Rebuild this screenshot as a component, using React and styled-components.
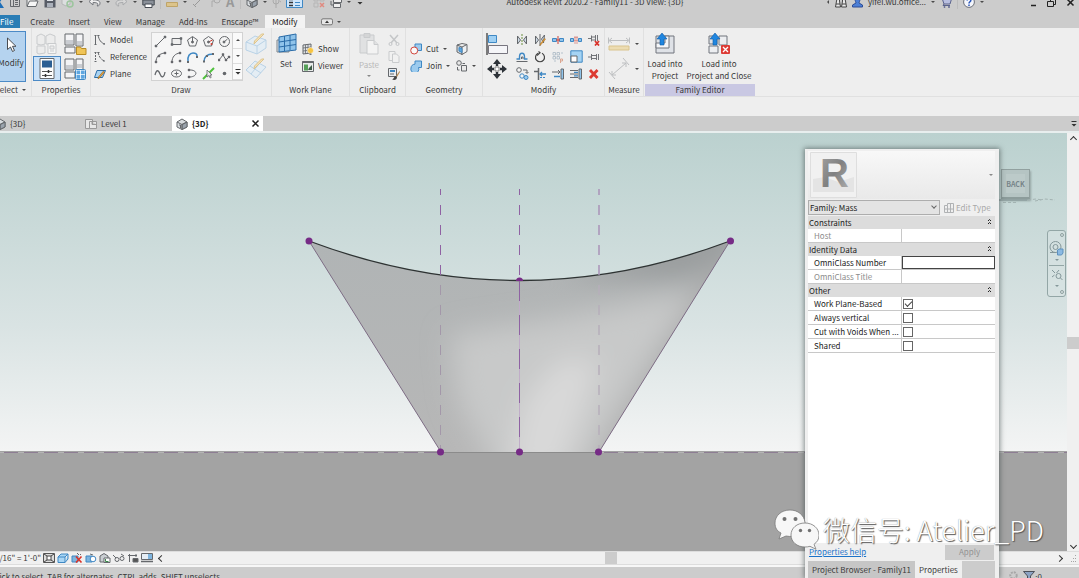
import React from 'react';
import styled, { createGlobalStyle, css } from 'styled-components';

const GlobalStyle = createGlobalStyle`
  * {
    box-sizing: border-box;
  }
  body {
    margin: 0;
    overflow: hidden;
    font-family: 'Noto Sans CJK SC', 'Open Sans', sans-serif;
    font-size: 8px;
    line-height: 12px;
    color: #383838;
    background: #cccccc;
  }
  button, input, select {
    margin: 0;
    padding: 0;
    border: 0;
    font: inherit;
    color: inherit;
    background: transparent;
  }
  svg {
    display: block;
    flex: none;
  }
`;

/* ---------- icons: [width, height, drawing] ---------- */

const sheet = '#fdfdfd';
const line = '#65686c';
const blue = '#3f88c4';
const sky = '#9ccbee';
const off = '#c9cbcd';

const icons = {
  revit: [9, 12, <path d="M4 0h5L5 6l4 6H5L1 7z" fill="#1f6fb8" />],
  recent: [12, 12, <g fill="none" stroke={line}><path d="M1.500 1v9.500h9V1" /><path d="M4.500 1v9M6 4.500h3M6 6.500h3M6 8.500h3" /></g>],
  open: [13, 12, <g stroke={line}><path d="M1 10V2h4l1 1h4v2" fill="#eee" /><path d="M1 10.500L3.500 5H12l-2 5.500z" fill="#f6f6f6" /></g>],
  save: [12, 12, <g><path d="M.5.5h11v11H.5z" fill="#575c66" /><path d="M3 1h6v4H3z" fill="#dfe3e8" /><path d="M3 7h6v4H3z" fill="#aab0ba" /></g>],
  sync: [13, 12, <g><path d="M1 2l4-1 4 1v6L5 10 1 8z" fill="#dcdedf" stroke="#b5b7b8" /><circle cx="9" cy="8" r="3" fill="none" stroke="#9cc59d" strokeWidth="1.500" /></g>],
  undo: [13, 12, <path d="M1 5.500L5 2v2c4-.5 7 1 7 3s-1 3-3 3c2-2 1-3.500-4-3.500V9z" fill="#eee" stroke="#74777d" />],
  redo: [13, 12, <path d="M12 5.500L8 2v2C4 3.500 1 5 1 7s1 3 3 3C2 8 3 6.500 8 6.500V9z" fill="#d6d6d6" stroke="#a9abad" />],
  print: [13, 12, <g stroke="#454a52"><path d="M3 4V1h7v3" fill="#fff" /><path d="M.8 4h11.400v5H.8z" fill="#8a9099" /><path d="M3 8h7v3.500H3z" fill="#fff" /></g>],
  ruler: [12, 12, <g><path d="M1 3.500h10" stroke="#999" /><path d="M.5 6.500h11v4H.5z" fill="#dcc48b" stroke="#bfa468" /></g>],
  aligned: [12, 12, <path d="M2 10l8-8M1 8l3 3M8 1l3 3" stroke="#999" fill="none" />],
  tag: [12, 12, <g fill="none" stroke="#aaa"><circle cx="8" cy="4" r="3" /><path d="M3 11V5h3" /></g>],
  house: [12, 12, <g stroke={line}><path d="M1 4l5-3 5 3v5L6 11.500 1 9z" fill="#d9dde0" /><path d="M6 6.500L11 4v5l-5 2.500z" fill="#9aa3ad" /><path d="M1 4l5 2.500L11 4M6 6.500v5" fill="none" /><path d="M3 7h1.500v3" fill="none" /></g>],
  section: [9, 12, <g stroke="#aaa" fill="none"><circle cx="4" cy="5" r="3" /><path d="M4 1v11M7.500 5l1.500 1" /></g>],
  thin: [17, 12, <g><path d="M.5.5h16v11H.5z" fill="#cfe6fb" stroke={blue} /><path d="M3 3.500h4M3 6.500h4M3 9.500h4" stroke="#333" strokeWidth="1.500" /><path d="M9 3.500h5M9 6.500h5M9 9.500h5" stroke={blue} /></g>],
  closeHidden: [12, 12, <g><path d="M1 1h4v4H1zM7 1h4v4H7zM1 7h4v4H1z" fill="none" stroke="#b5b5b5" /><path d="M7 7l4 4M11 7l-4 4" stroke="#e08a80" strokeWidth="1.500" /></g>],
  switchWin: [12, 12, <g stroke={line} fill="#eee"><path d="M3.500.5h8v6h-8z" /><path d="M1 5v4h2" fill="none" /><path d="M3.500 7.500h7v4h-7z" /></g>],
  customize: [8, 8, <g fill="#333"><path d="M1.500 1h5v1h-5zM1.500 4h5L4 6.500z" /></g>],
  binoc: [12, 12, <g fill="#e8e8e8" stroke="#454545"><path d="M2.500 1h2v4l1 6h-5l1-6zM7.500 1h2l1 4 1 6h-5l1-6z" /><path d="M1 8h4M7 8h4" /></g>],
  user: [11, 12, <g fill="#4c7fd6" stroke="#2c4c96"><path d="M3 3a2.500 3 0 015 0c0 2-1 3-1 4l3.500 2v2h-10V9L4 7C4 6 3 5 3 3z" /></g>],
  cart: [12, 12, <g stroke="#5a628c" fill="#b9bfe0"><path d="M0 2h2l2 6h6l1.500-5H2.500" /><path d="M4 8l-1 1.500h7" fill="none" /><circle cx="4.500" cy="11" r=".6" /><circle cx="9" cy="11" r=".6" /></g>],
  help: [12, 12, <g><circle cx="6" cy="6" r="5.400" fill="#f4f6fb" stroke="#6b6f78" /><path d="M4.200 4.500C4.200 2 8 2.200 7.800 4.500 7.700 5.800 6 5.800 6 7.500M6 8.500v1.500" fill="none" stroke="#2a57bb" strokeWidth="1.500" /></g>],
  minimize: [7, 12, <path d="M1 9.500h5" stroke="#222" strokeWidth="1.500" />],
  restore: [9, 12, <g fill="none" stroke="#222"><path d="M3.500 5.500v-2h5v5h-2" /><path d="M.5 5.500h6v5h-6z" /></g>],
  close: [9, 9, <path d="M1.500 1.500l6 6M7.500 1.500l-6 6" stroke="#222" strokeWidth="1.500" />],
  collapse: [12, 8, <g><rect x=".5" y=".8" width="11" height="6" rx="1.500" fill="#e6e6e6" stroke="#777" /><path d="M4 5h4L6 2.500z" fill="#333" /></g>],

  cursor: [11, 16, <path d="M1.500 1v11.500l3-2.500 2 4.500 2-1-2-4.200h3.500z" fill="#fff" stroke="#4a4d52" />],
  typeOff: [22, 22, <g fill="#ececec" stroke={off}><path d="M1 3l4-2 4 2v8l-4 1-4-1zM10 3l4-2 5 2v8h-9zM1 13h8v7l-6 1-2-1z" /><path d="M12 10.500h8v10h-8z" fill="#f4f4f4" /><path d="M14 13h4v3h-4zM14 18h4" /></g>],
  typeFolder: [23, 22, <g><path d="M1 1h9v11H1zM12 1h7v12h-7zM1 14h10v6H1z" fill="#f4f4f6" stroke={line} /><path d="M2 7h7v4H2zM13 8h5v4h-5z" fill="#c9ccd1" /><path d="M12.500 14h4l1 1.500h4.500v6h-9.500z" fill="#efc457" stroke="#b78a25" /></g>],
  typeProps: [16, 21, <g><path d="M1 .5h14v20H1z" fill={sheet} stroke={line} /><path d="M3 2.500h10v7H3z" fill="#2c5f93" /><path d="M3 13.500h10M3 17.500h10" stroke="#555" /><path d="M9.500 12v3M6.500 16v3" stroke="#333" strokeWidth="1.500" /></g>],
  typeGrid: [23, 22, <g><path d="M1 1h9v11H1zM12 1h7v12h-7zM1 14h10v6H1z" fill="#f4f4f6" stroke={line} /><path d="M2 7h7v4H2zM13 6h5v4h-5z" fill="#c9ccd1" /><rect x="11.500" y="11.500" width="10" height="10" rx="1" fill="#fff" stroke={blue} /><path d="M12.500 12.500h3.700v3.700h-3.700zM17 12.500h3.700v3.700H17zM12.500 17h3.700v3.700h-3.700zM17 17h3.700v3.700H17z" fill="#5ea6e0" /></g>],

  model: [12, 12, <g fill="none" stroke={line}><path d="M1.500 1v10M4 1c1 5 3 8 7 9" /><path d="M.5 1.500h2M.5 10.500h2M3.500 1.500h2M10 9v2" /></g>],
  reference: [12, 12, <g fill="none" stroke={line}><path d="M1.500 1v10" strokeDasharray="2 1" /><path d="M4 1c1 5 3 8 7 9" strokeDasharray="3 1" /><path d="M.5 1.500h2M.5 10.500h2M3.500 1.500h2M10 9v2" /></g>],
  plane: [12, 12, <g><path d="M3 2.500h8.500l-3 7H.5z" fill="#a9d3f2" stroke="#2d6ea8" /><path d="M10.500 4L5.500 10l-1.500.8.300-1.600 5-6z" fill="#f2a63a" stroke="#8a5a17" strokeWidth=".6" /></g>],

  dLine: [13, 13, <g stroke={line}><path d="M2 11l9-9" /><path d="M1 10h2v2H1zM10 1h2v2h-2z" fill={line} strokeWidth=".5" /></g>],
  dRect: [13, 13, <g stroke={line} fill="#eee"><path d="M2 3.500h9v6H2z" /><path d="M1 8.500h2v2H1zM10 2.500h2v2h-2z" fill={line} strokeWidth=".5" /></g>],
  dPoly: [13, 13, <g stroke={line} fill="none"><path d="M6.500 1.500l5 3.500-2 6h-6l-2-6z" /><path d="M6.500 2v5" /><circle cx="6.500" cy="7" r="1" fill={line} /></g>],
  dPolyOut: [13, 13, <g stroke={line} fill="none"><path d="M6.500 1.500l5 3.500-2 6h-6l-2-6z" /><path d="M6.500 7l4-2" stroke="#d23a2e" /><circle cx="6.500" cy="7" r="1" fill={line} /><circle cx="9.500" cy="9" r="1" fill="#d23a2e" stroke="none" /></g>],
  dCircle: [13, 13, <g stroke={line} fill="none"><circle cx="6.500" cy="6.500" r="5" /><path d="M6 7l3.500-3" /><circle cx="6" cy="7" r="1" fill={line} /></g>],
  dArc: [13, 13, <g stroke={line} fill="none"><path d="M2 11C2 6 5 2.500 11 2" /><path d="M1 10h2v2H1zM10 1h2v2h-2zM4 4h2v2H4z" fill={line} strokeWidth=".4" /></g>],
  dArcCtr: [13, 13, <g stroke={line} fill="none"><path d="M2 11C2 6 5 2.500 10 2" /><path d="M1 10h2v2H1zM9 1h2v2H9zM9 9h2v2H9z" fill={line} strokeWidth=".4" /></g>],
  dTan: [13, 13, <g fill="none"><path d="M2 11C1 5 4 2 7 2c3 0 4 1 4 3" stroke={blue} strokeWidth="1.500" /><path d="M1 10h2v2H1zM10 5h2v2h-2z" fill={line} /></g>],
  dFillet: [13, 13, <g fill="none"><path d="M2 11C2 6 5 3 11 3" stroke={blue} strokeWidth="1.500" /><path d="M1 9.500h2v2H1zM10 2h2v2h-2zM4 4h2v2H4z" fill={line} /></g>],
  dSpline: [13, 13, <g stroke={line} fill="none"><path d="M1 9l4-5 3 5 3-3" /><path d="M0 8h2v2H0zM4 2.500h2v2H4zM7 8h2v2H7zM10 5h2v2h-2z" fill={line} strokeWidth=".4" /></g>],
  dWave: [13, 13, <path d="M1 8c1.500-6 3.500-5 5-1s4 4 5-2" stroke={line} strokeWidth="1.300" fill="none" />],
  dEllipse: [13, 13, <g stroke={line} fill="none"><ellipse cx="6.500" cy="6.500" rx="5" ry="3.500" /><path d="M4.500 6.500h4M6.500 4.500v4" /></g>],
  dHalf: [13, 13, <g stroke={line} fill="none"><path d="M3 3c9-.5 9 6.500 1 7" /><path d="M2 2h2v2H2zM2 9h2v2H2z" fill={line} strokeWidth=".4" /></g>],
  dPick: [13, 13, <g><path d="M1 12L12 1" stroke="#4fc13c" strokeWidth="2" /><path d="M5 3v7l2-1.500 1.200 2.500 1-.6L8 8h2z" fill="#eee" stroke={line} strokeWidth=".8" /></g>],
  dPoint: [13, 13, <circle cx="6.500" cy="6.500" r="1.800" fill={line} />],
  paintFace: [24, 22, <g stroke="#b9d2e6" fill="#e4edf4"><path d="M2 9l9-6 11 4v8l-9 6-11-4z" /><path d="M2 9l11 4 9-6M13 13v8" fill="none" /><path d="M20 1l-8 8-2 2 .5-3 7-7z" fill="#f6e2b5" stroke="#dcc48f" /></g>],
  paintPlane: [24, 22, <g stroke="#b9d2e6" fill="#e4edf4"><path d="M2 12L11 3l11 6-10 11z" /><path d="M6 8l11 7M15 6L7 16" fill="none" /><path d="M20 1l-8 8-2 2 .5-3 7-7z" fill="#f6e2b5" stroke="#dcc48f" /></g>],

  setPlane: [21, 21, <g><path d="M1 7h12v12H1z" fill="#e3e7ea" stroke="#7d848b" /><path d="M3 4l17-3v16L3 19z" fill="#8fc3ea" stroke="#2a6ca8" /><path d="M8.500 3v15M14 2v15M3 9l17-2.500M3 14l17-2.500" stroke="#2a6ca8" fill="none" /></g>],
  show: [12, 12, <g><path d="M1 2l8-1v9l-8 1z" fill="#dfe2e5" stroke={line} /><path d="M3.500 2v9M6 1.500v9M1 5l8-1M1 8l8-1" stroke={line} strokeWidth=".8" /><circle cx="8.500" cy="7.500" r="3" fill="#f7c441" stroke="#fff" strokeWidth=".5" /><path d="M7.500 10.500h2v1.500h-2z" fill="#777" /></g>],
  viewer: [12, 12, <g><path d="M.5 1.500h11v10H.5z" fill="#e9eceb" stroke={line} /><path d="M.5 1h11v2H.5z" fill={line} /><path d="M2 4.500h4v6H2z" fill="#57a05a" /><path d="M7 8l3-3v5H6z" fill="#3e5a46" /></g>],
  paste: [20, 22, <g stroke={off} fill="#e0e1e2"><path d="M1 2h14v18H1z" /><path d="M5 .5h6v4H5z" fill="#d4d5d6" /><path d="M8 7.500h7l4 4v9.500H8z" fill="#f3f3f3" /><path d="M15 7.500v4h4" /></g>],
  cutClip: [12, 12, <g stroke="#c4c6c8" fill="none"><path d="M2 1l7 8M10 1L3 9" strokeWidth="1.500" /><circle cx="2.500" cy="10" r="1.500" /><circle cx="9.500" cy="10" r="1.500" /></g>],
  copyClip: [12, 12, <g stroke={off} fill="#f1f1f1"><path d="M1 .5h6v9H1z" /><path d="M4.500 3h4l2.500 2.500v6H4.500z" /></g>],
  matchType: [12, 12, <g><path d="M.5.5h8v8h-8z" fill="#e9ecef" stroke={line} /><path d="M2 2h5v2H2z" fill={blue} /><path d="M2 6h4" stroke={line} /><path d="M11.500 3L8 8l1 1 3-5z" fill="#b98e57" /><path d="M8 8c-2 0-2 3-4 3.500 3 1 5 0 5-2.500z" fill="#444" /></g>],
  cutGeo: [12, 12, <g><path d="M5 1h6.500v6.500H5z" fill={sky} stroke={blue} /><circle cx="4.200" cy="7.500" r="3.500" fill="#fafafa" stroke="#d0433a" /></g>],
  joinGeo: [12, 12, <path d="M5 1h6.500v6.500H8.500A4 4 0 111 8c0-2 1.500-3.800 4-3.800z" fill={sky} stroke={blue} />],
  cope: [12, 12, <g stroke={line}><path d="M1 2l5 2v7.500L1 9z" fill="#d5d9dd" /><path d="M6 4l5-2.500v7L6 11.500z" fill="#eef0f2" /><path d="M1 2l5-1.500 5 1" fill="none" /><path d="M3 4.500l3 1v4l-3-1.500z" fill="#5fa8e0" stroke={blue} /></g>],
  paintGeo: [12, 12, <g stroke={line} fill="#e9e9e9"><circle cx="3" cy="3" r="2.300" /><path d="M5.500 5.500h5v5.500h-5z" /><path d="M1.500 7v3h2M9 3.500h-2.500" fill="none" /></g>],

  align: [22, 22, <g><path d="M1 0v22" stroke="#555" strokeWidth="1.500" /><path d="M2.500 2.500h8v7h-8z" fill="#9fd0f3" stroke={blue} /><path d="M2.500 12.500h19v8h-19z" fill="#f5f5f8" stroke="#77757f" /></g>],
  move: [22, 22, <g fill="#2d3238"><path d="M11 1l4 5H7zM11 21l-4-5h8zM1 11l5-4v8zM21 11l-5 4V7z" /><path d="M9.800 5h2.400v3H9.800zM9.800 14h2.400v3H9.800zM5 9.800h3v2.400H5zM14 9.800h3v2.400h-3z" /><path d="M9 9h4v4H9z" fill="#fff" stroke="#666" strokeWidth=".8" /></g>],
  mirrorPick: [12, 12, <g fill="#cfdbe6" stroke={line}><path d="M1.500 2l3 4-3 4zM10.500 2l-3 4 3 4z" /><path d="M6 0v12" stroke="#6b8f3f" strokeDasharray="2 1" /></g>],
  mirrorDraw: [12, 12, <g fill="#cfdbe6" stroke={line}><path d="M1.500 2l3 4-3 4zM10.500 1l-3 4 2 4z" /><path d="M6 0v12" /><path d="M11.500 5l-4 5-1.500 1.500.5-2 4-5z" fill="#efa33a" stroke="#a06a18" strokeWidth=".5" /></g>],
  split: [12, 12, <g><path d="M.5 4.500h4v3h-4zM7.500 4.500h4v3h-4z" fill="#8fc4ec" stroke={blue} /><path d="M6 2v8M4 6h4" stroke="#cc4338" /></g>],
  splitGap: [12, 12, <g><path d="M.5 4.500h3v3h-3zM8.500 4.500h3v3h-3z" fill="#8fc4ec" stroke={blue} /><path d="M5 2.500v7M7 2.500v7" stroke="#cc4338" strokeDasharray="2 1" /></g>],
  unpin: [12, 12, <g><path d="M0 4.500h3M3.500 1.500v6M3.500 3h4M3.500 6h4M7.500 1v6.500M9.500 1v6" stroke={line} fill="none" strokeWidth=".9" /><path d="M7 7l4 4.500M11 7l-4 4.500" stroke="#d9332a" strokeWidth="1.800" /></g>],
  offset: [12, 12, <g fill="none"><path d="M.5 10.500h11" stroke={line} /><path d="M.5 8h3V6c0-5 5-5 5 0v2h3" stroke={blue} strokeWidth="1.400" /><path d="M5.500 8V6h1.500v2" stroke={line} /></g>],
  rotate: [12, 12, <g fill="none" stroke="#444" strokeWidth="1.200"><path d="M4 2.200A4.500 4.500 0 108 2.200" /><path d="M3 4.500l3-2.700L4.500.5" /></g>],
  array: [12, 12, <g fill="none" stroke="#b6c2cc"><path d="M1 1.500h2.500V4H1zM5 1.500h2.500V4H5zM1 5.500h2.500V8H1zM5 5.500h2.500V8H5z" /><path d="M9 2h2M2 10h2" /><path d="M8.500 12V8h2v2h-2" stroke="#dba691" /></g>],
  scale: [13, 13, <g><path d="M.8.8h11.400v11.400H.8z" fill="#a5d4f4" stroke={blue} /><path d="M1 6h6v6H1z" fill="#fff" stroke={line} /></g>],
  pin: [12, 12, <path d="M0 6h3.500M3.500 3v6M3.500 4.500h5M3.500 7.500h5M8.500 3v6M10.500 3v6" stroke={line} fill="none" strokeWidth=".9" />],
  copy: [13, 13, <g fill="#f5f5f5" stroke={line}><circle cx="3" cy="3" r="2.300" /><circle cx="6" cy="9" r="2.200" stroke={blue} /><circle cx="10" cy="10.500" r="2" stroke={blue} fill={sky} /><path d="M7 3h4v3M9.500 5l1.500 1.500L12.500 5" fill="none" /></g>],
  trimCorner: [12, 12, <g><path d="M4.500 0v12M0 3.500h5" stroke={line} strokeWidth="1.500" /><path d="M6 6h6M8 4L6 6l2 2" stroke={blue} fill="none" strokeWidth="1.300" /><path d="M6 9.500h6" stroke={blue} strokeDasharray="2 1" /></g>],
  trimOne: [12, 12, <g><path d="M9 1h2.500v10H9z" fill="#8fc4ec" stroke={line} /><path d="M0 4h8M6 2l2 2-2 2" stroke={line} fill="none" /><path d="M2 8.500h6" stroke={blue} strokeWidth="1.500" /></g>],
  trimMany: [12, 12, <g><path d="M9 1h2.500v10H9z" fill="#8fc4ec" stroke={line} /><path d="M0 2.500h8M0 6h8M0 9.500h8" stroke={line} /><path d="M4 4.300h4M4 7.800h4" stroke={blue} strokeWidth="1.300" /></g>],
  erase: [12, 12, <path d="M2 2l7.500 8M9.500 2L2 10" stroke="#dc3a31" strokeWidth="2.800" />],
  measureOff: [22, 14, <g><path d="M2 3.500h18M4 1L1 3.500 4 6M18 1l3 2.500L18 6M.5.500v6M21.500.5v6" stroke="#bcbec0" fill="none" /><path d="M1 9h20v4H1z" fill="#ecdcb2" stroke="#d9c48e" /></g>],
  dimOff: [22, 22, <path d="M4 17L18 5M4 13v4h4M14 5h4v4M1 14l6 7M15 0l6 7" stroke="#bcbec0" fill="none" />],
  load: [20, 21, <g><path d="M1 3h18v17H1z" fill="#dfe2e7" stroke="#70747c" /><path d="M1 10h9V3h4v12H1z" fill="#f5f6f8" stroke="#70747c" /><path d="M7 0l5 6H9v6H5V6H2z" fill="#1f86e0" stroke="#0f5aa6" strokeWidth=".6" /></g>],
  loadClose: [23, 21, <g><path d="M1 13h9v7H1zM11 3h8v9h-8z" fill="#eceef1" stroke="#70747c" /><path d="M1 3h8v8H1z" fill="#dfe2e7" stroke="#70747c" /><path d="M7 0l5 6H9v6H5V6H2z" fill="#1f86e0" stroke="#0f5aa6" strokeWidth=".6" /><rect x="13" y="12" width="9" height="9" rx="1" fill="#dd3b35" /><path d="M15 14l5 5M20 14l-5 5" stroke="#fff" strokeWidth="1.300" /></g>],

  plan: [12, 12, <g stroke="#999" fill="#e7e7e7"><path d="M.5 1.500h7v9h-7z" /><path d="M4.500 3.500h7v7h-7zM7 3.500v3h4.500" /></g>],
  grid: [10, 10, <path d="M.5 2.500h3v-2h6v9h-9zM3.500 2.500v7M.5 6h9M6.500.5v9" stroke="#b0b2b4" fill="none" />],

  detail: [12, 10, <g><path d="M.5.5h11v9H.5z" fill="#ddd" stroke="#555" /><path d="M1 1l3 2M11 1L8 3M4 3h4v4H4zM1 9l3-2M11 9L8 7" stroke="#444" fill="#fff" /></g>],
  style: [12, 10, <g fill="#a9d6f5" stroke={blue}><path d="M1 4h7v5.500H1zM1 4l3-3h7L8 4M11 1v5L8 9.500" /></g>],
  sunOff: [12, 10, <g><path d="M1 3h6v6H1z" fill="#7fb5df" stroke={blue} /><path d="M6 0l2 2M9 1l1 1" stroke={line} /><path d="M5 3.500l5.500 6M10.500 3.500l-5.500 6" stroke="#d9332a" strokeWidth="1.600" /></g>],
  shadow: [12, 10, <g><path d="M1 3h6v6H1z" fill="#7fb5df" stroke={blue} /><circle cx="8" cy="6" r="2.800" fill="#fff" stroke={blue} /><path d="M5 1l3 1" stroke={line} /></g>],
  crop: [12, 10, <g stroke={line}><path d="M1 3l4-2.500L9 3v6H1z" fill="#c9ced2" /><path d="M5 5h6v4.500H5z" fill="#fff" /><path d="M6.500 6v2.500h3" fill="none" stroke="#3b8a4c" /></g>],
  glasses: [12, 10, <g stroke={line} fill="none"><path d="M0 2l3 3M8 1l3 2" /><circle cx="4" cy="6.500" r="2" /><circle cx="9" cy="5.500" r="2" /></g>],
  lock3d: [12, 10, <g stroke={line} fill="none"><path d="M1 2.500h9M2.500 1v8M9 1v3" /><path d="M6 5.500h5v3.500H6z" fill="#555" /></g>],
  hideIso: [12, 10, <g><path d="M.5.5h11v6H.5z" fill="#e6eef5" stroke={line} /><path d="M7 1h4v5H7z" fill="#7fb5df" /><path d="M0 8.500h12" stroke={line} strokeWidth="1.500" /></g>],
  funnel: [12, 9, <path d="M.5.5h11L7.500 5v3.500h-3V5z" fill="#8ca3c4" stroke="#4a4f58" />],
  gear: [9, 9, <circle cx="4.500" cy="4.500" r="3.200" fill="none" stroke="#a7a7a7" strokeWidth="2" strokeDasharray="2 1" />],
  wheel: [15, 15, <g fill="none" stroke="#84979a"><circle cx="6.500" cy="6" r="5.500" /><circle cx="6.500" cy="6" r="2.500" /><path d="M1 11.500h6" /><path d="M8.500 9l1.500-1h4v4l-1.500 2h-4z" fill="#8bb9e2" stroke="#5f91be" /></g>],
  zoomFit: [12, 12, <g fill="none" stroke="#84979a"><path d="M1 1l3 3M8 1L5.500 4M1 8l2.500-2" /><circle cx="7.500" cy="7" r="2.500" /><path d="M9.500 9l2 2" /></g>],
};

const Icon = ({ name }) => {
  const [w, h, art] = icons[name];
  return (
    <svg width={w} height={h} viewBox={`0 0 ${w} ${h}`} aria-hidden="true">
      {art}
    </svg>
  );
};

const Caret = styled.span`
  flex: none;
  width: 0;
  height: 0;
  border: 2px solid transparent;
  border-top-color: ${props => props.$color || '#4a4a4a'};
  border-bottom: 0;
  transform: rotate(${props => props.$turn || 0}deg);
`;

/* ---------- title bar ---------- */

const Shell = styled.div`
  position: relative;
  display: flex;
  flex-direction: column;
  height: 100vh;
  overflow: hidden;
`;

const TitleBar = styled.header`
  display: flex;
  align-items: center;
  height: 4px;
  margin-bottom: 11px;
  padding-right: 4px;
  line-height: 12px;
  white-space: nowrap;
`;

const TitleGroup = styled.div`
  display: flex;
  align-items: center;
  gap: ${props => props.$gap || 5}px;
  margin-right: ${props => props.$after || 0}px;
`;

const QuickAccess = styled(TitleGroup)`
  margin-left: -5px;
`;

const TitleText = styled.h1`
  flex: 1;
  margin: 0;
  font-size: 8px;
  font-weight: 400;
  text-align: center;
`;

const IconButton = styled.button`
  display: flex;
  align-items: center;
  justify-content: center;
  flex: none;
`;

const Divider = styled.i`
  width: 1px;
  height: 14px;
  background: #bdbdbd;
`;

const FontMark = styled.span`
  width: 9px;
  font-size: 13px;
  font-weight: 700;
  color: #999999;
`;

/* ---------- ribbon ---------- */

const TabList = styled.nav`
  display: flex;
  align-items: stretch;
  height: 13px;
  margin-left: -7px;
`;

const RibbonTab = styled.button`
  padding: 0 7px;
  line-height: 13px;
  ${props => props.$file && css`
    color: #ffffff;
    background: #2a7db5;
    margin-right: 3px;
  `}
  ${props => props.$active && css`
    color: #222222;
    background: #f3f3f3;
  `}
`;

const CollapseButton = styled(IconButton)`
  gap: 4px;
  margin-left: 16px;
`;

const Ribbon = styled.section`
  display: flex;
  height: 69px;
  margin-left: -10px;
  background: #eeeeee;
  border-bottom: 1px solid #e0e0e0;
`;

const PanelBox = styled.section`
  display: flex;
  flex-direction: column;
  flex: none;
  width: ${props => props.$width}px;
  border-right: 1px solid #e0e0e0;
  ${props => props.$plain && css`
    border-right: 0;
    margin-left: 1px;
  `}
`;

const PanelBody = styled.div`
  display: flex;
  flex: 1;
  padding: 3px 0 0 ${props => props.$pad}px;
`;

const PanelTitle = styled.h2`
  display: flex;
  align-items: center;
  justify-content: center;
  gap: 4px;
  height: 12px;
  margin: 0;
  font-size: 8px;
  font-weight: 400;
  background: ${props => props.$accent ? '#c9c8e3' : 'transparent'};
`;

const Panel = ({ title, width, pad, accent, menu, children }) => (
  <PanelBox $width={width} $plain={accent}>
    <PanelBody $pad={pad}>{children}</PanelBody>
    <PanelTitle $accent={accent}>{title}{menu && <Caret />}</PanelTitle>
  </PanelBox>
);

const ModifyButton = styled.button`
  display: flex;
  flex-direction: column;
  align-items: center;
  gap: 4px;
  width: 30px;
  height: 51px;
  padding-top: 5px;
  background: #b5d3ef;
  border: 1px solid #4c8ac6;
`;

const BigButton = styled.button`
  display: flex;
  flex-direction: column;
  align-items: center;
  flex: none;
  gap: 4px;
  width: ${props => props.$width}px;
  height: 51px;
  padding-top: 2px;
  white-space: nowrap;
  color: ${props => props.disabled ? '#b8b8b8' : 'inherit'};
`;

const Column = styled.div`
  display: flex;
  flex-direction: column;
  flex: none;
  width: ${props => props.$width}px;
  padding-top: ${props => props.$top || 0}px;
  margin-left: ${props => props.$left || 0}px;
`;

const ToolGrid = styled.div`
  display: grid;
  align-content: start;
  grid-template-columns: repeat(${props => props.$cols}, ${props => props.$cell}px);
  grid-auto-rows: ${props => props.$row}px;
  margin-left: ${props => props.$left || 0}px;
`;

const ToolCell = styled(IconButton)`
  ${props => props.$on && css`
    background: #cbe2f8;
    border: 1px solid #4c8ac6;
  `}
`;

const TextTool = styled.button`
  display: flex;
  align-items: center;
  gap: 4px;
  height: 17px;
  line-height: 17px;
  white-space: nowrap;
`;

const Gallery = styled.div`
  display: flex;
  height: 49px;
  margin-top: 1px;
  background: #f5f5f5;
  border: 1px solid #d2d2d2;
`;

const GalleryScroll = styled.div`
  display: grid;
  grid-template-rows: repeat(3, 1fr);
  width: 10px;
  background: #fafafa;
  border-left: 1px solid #d2d2d2;
`;

const ScrollButton = styled(IconButton)`
  border-bottom: 1px solid #dddddd;
`;

const OptionsBar = styled.div`
  height: 19px;
  background: #eeeeee;
`;

/* ---------- view tabs ---------- */

const DocTabs = styled.nav`
  display: flex;
  align-items: center;
  height: 15px;
  margin-left: -10px;
  padding-right: 1px;
`;

const DocTab = styled.button`
  display: flex;
  align-items: center;
  gap: 4px;
  width: 91px;
  height: 15px;
  padding: 0 3px 0 4px;
  ${props => props.$active && css`
    color: #222222;
    font-weight: 700;
    background: #ffffff;
  `}
`;

const Spacer = styled.span`
  flex: 1;
`;

/* ---------- drawing area ---------- */

const Workspace = styled.main`
  display: flex;
  flex: 1;
  min-height: 0;
  border-top: 2px solid #e8eeee;
`;

const Viewport = styled.div`
  position: relative;
  flex: 1;
  background: linear-gradient(#bbd1cf, #d9e3e3 46%, #f3f4f4 76%, #a3a3a3 76%);
`;

const Scene = styled.svg`
  width: 100%;
  height: 100%;
`;

const ViewCube = styled.button`
  position: absolute;
  top: 36px;
  right: 37px;
  width: 29px;
  height: 30px;
  padding: 5px 3px;
  font-size: 7px;
  font-weight: 700;
  color: #77858a;
  background: #bccac9;
  border: 1px solid #91a09f;
  border-bottom: 2px solid #8c9c9b;
  box-shadow: inset 0 0 0 4px #b5c4c3, 1px 2px 2px #94a4a3;
`;

const CompassRing = styled.svg`
  position: absolute;
  top: 64px;
  right: 6px;
`;

const NavBar = styled.div`
  position: absolute;
  top: 97px;
  right: 1px;
  display: flex;
  flex-direction: column;
  align-items: center;
  justify-content: space-between;
  width: 19px;
  height: 67px;
  padding: 2px 1px;
  border: 1px solid #93a6a6;
  border-radius: 3px;
  background: rgba(220, 230, 230, 0.4);
`;

const NavDot = styled.i`
  align-self: flex-end;
  width: 4px;
  height: 4px;
  border: 1px solid #8fa0a0;
  border-radius: 50%;
`;

const NavRule = styled.i`
  width: 15px;
  height: 1px;
  background: #93a6a6;
`;

const ScrollTrack = styled.div`
  display: flex;
  align-items: center;
  background: #f0f0f0;
  ${props => props.$vertical ? css`
    flex-direction: column;
    width: 12px;
    padding: 3px 0 2px;
  ` : css`
    flex: 1;
    height: 12px;
    padding-right: 2px;
  `}
`;

const Thumb = styled.i`
  width: 12px;
  height: 12px;
  background: #cccccc;
`;

const Space = styled.span`
  flex: ${props => props.$grow};
`;

const Chevron = styled.i`
  width: 5px;
  height: 5px;
  margin: 1px;
  border: solid #333333;
  border-width: 1px 1px 0 0;
  transform: rotate(${props => props.$turn}deg);
`;

const ViewControls = styled.div`
  display: flex;
  align-items: center;
  height: 14px;
  background: #f0f0f0;
  border-top: 1px solid #dddddd;
  border-bottom: 1px solid #dddddd;
  white-space: nowrap;
`;

const ScaleText = styled.span`
  width: 48px;
  margin-left: -5px;
`;

const ViewIcons = styled.div`
  display: flex;
  align-items: center;
  gap: 2px;
  margin-right: 5px;
`;

const StatusBar = styled.footer`
  display: flex;
  align-items: flex-start;
  height: 13px;
  margin-left: -8px;
  padding: 4px 37px 0 0;
  border-top: 2px solid #f7f7f7;
  overflow: hidden;
  white-space: nowrap;
`;

/* ---------- properties palette ---------- */

const Palette = styled.aside`
  position: absolute;
  top: 149px;
  right: 80px;
  bottom: 0;
  display: flex;
  flex-direction: column;
  width: 194px;
  padding: 2px 4px 0 3px;
  background: #efefef;
  box-shadow: 0 0 5px 1px rgba(60, 70, 70, 0.6);
  color: #222222;
`;

const TypePreview = styled.div`
  display: flex;
  align-items: center;
  justify-content: space-between;
  height: 48px;
  padding: 0 2px;
  background: linear-gradient(#f8f8f8, #e9e9e9);
`;

const TypeRow = styled.div`
  display: flex;
  align-items: center;
  height: 17px;
`;

const SelectWrap = styled.label`
  position: relative;
  display: flex;
  align-items: center;
  width: 132px;
  margin-right: 4px;
`;

const SelectMark = styled(Chevron)`
  position: absolute;
  right: 4px;
  top: 4px;
  width: 4px;
  height: 4px;
  margin: 0;
  border-color: #666666;
`;

const TypeSelect = styled.select`
  appearance: none;
  width: 100%;
  height: 15px;
  padding-left: 1px;
  background: #e3e3e3;
  border: 1px solid #adadad;
`;

const EditType = styled.button`
  display: flex;
  align-items: center;
  gap: 2px;
  color: #a8a8a8;
  white-space: nowrap;
`;

const PropertyTable = styled.table`
  width: 100%;
  table-layout: fixed;
  border-collapse: separate;
  border-spacing: 0;
  background: #ffffff;
  th, td {
    padding: 0;
    font-weight: 400;
    text-align: left;
  }
`;

const GroupCell = styled.th`
  height: 13px;
  background: #dcdcdc;
`;

const GroupButton = styled.button`
  display: flex;
  justify-content: space-between;
  width: 100%;
  height: 13px;
  padding: 0 3px 0 1px;
  line-height: 13px;
`;

const LabelCell = styled.th`
  width: 94px;
  height: 14px;
  border-right: 1px solid #c8c8c8;
  border-bottom: 1px solid #c8c8c8;
  color: ${props => props.$muted ? '#8c8c8c' : 'inherit'};
`;

const PropertyLabel = styled.label`
  display: block;
  padding-left: 6px;
  line-height: 13px;
  white-space: nowrap;
`;

const ValueCell = styled.td`
  height: 14px;
  border-bottom: 1px solid #c8c8c8;
`;

const ValueInput = styled.input`
  display: block;
  width: 100%;
  height: 13px;
  outline: ${props => props.$focus ? '1px solid #444444' : '0'};
  outline-offset: -1px;
`;

const Check = styled.input`
  appearance: none;
  display: block;
  width: 10px;
  height: 10px;
  margin-left: 1px;
  background: #ffffff;
  border: 1px solid #666666;
  &:checked::after {
    content: '';
    display: block;
    width: 6px;
    height: 3px;
    margin: 1px;
    border: solid #444444;
    border-width: 0 0 1px 1px;
    transform: rotate(-45deg);
  }
`;

const PaletteFill = styled.div`
  flex: 1;
  background: #ffffff;
`;

const PaletteFooter = styled.div`
  display: flex;
  align-items: center;
  justify-content: space-between;
  height: 18px;
  padding: 0 1px;
`;

const HelpLink = styled.a`
  color: #1c73c9;
`;

const ApplyButton = styled.button`
  width: 49px;
  height: 15px;
  color: #929292;
  background: #cccccc;
`;

const PaletteTabs = styled.div`
  display: flex;
  height: 17px;
  background: #cccccc;
`;

const PaletteTab = styled.button`
  padding: 0 4px;
  line-height: 16px;
  white-space: nowrap;
  color: #3c3c3c;
  background: ${props => props.$active ? '#efefef' : '#c6c6c6'};
`;

const Watermark = styled.div`
  position: absolute;
  right: 35px;
  bottom: 28px;
  display: flex;
  align-items: center;
  gap: 4px;
  font-family: 'Noto Sans CJK SC', sans-serif;
  font-size: 27px;
  font-weight: 300;
  line-height: 40px;
  color: #ffffff;
  text-shadow: 1px 1px 1px #555555, 0 0 1px #888888;
  white-space: nowrap;
  pointer-events: none;
`;

const quickTools = ['revit', 'recent', 'open', 'save', 'sync', '|v', 'undo', '|v', 'redo', '|v', 'print', '|', 'ruler', '|v', 'aligned', 'tag'];
const viewTools = ['house', '|v', 'section', 'thin', '|gap', 'closeHidden', 'switchWin', '|v', 'customize'];
const ribbonTabs = ['Create', 'Insert', 'View', 'Manage', 'Add-Ins', 'Enscape™'];
const drawTools = [
  'dLine', 'dRect', 'dPoly', 'dPolyOut', 'dCircle',
  'dArc', 'dArcCtr', 'dTan', 'dFillet', 'dSpline',
  'dWave', 'dEllipse', 'dHalf', 'dPick', 'dPoint',
];
const modifyTools = [
  'mirrorPick', 'mirrorDraw', 'split', 'splitGap', 'unpin',
  'offset', 'rotate', 'array', 'scale', 'pin',
  'copy', 'trimCorner', 'trimOne', 'trimMany', 'erase',
];
const viewControls = ['detail', 'style', 'sunOff', 'shadow', 'crop', 'glasses', 'lock3d', 'hideIso'];

const groups = [
  { name: 'Constraints', rows: [{ label: 'Host', muted: true }] },
  {
    name: 'Identity Data',
    rows: [{ label: 'OmniClass Number', focus: true }, { label: 'OmniClass Title', muted: true }],
  },
  {
    name: 'Other',
    rows: [
      { label: 'Work Plane-Based', check: true, on: true },
      { label: 'Always vertical', check: true },
      { label: 'Cut with Voids When ...', check: true },
      { label: 'Shared', check: true },
    ],
  },
];

const renderQuick = (name, i) => {
  if (name === '|v') return <Caret key={i} />;
  if (name === '|') return <Divider key={i} />;
  if (name === '|gap') return <span key={i} />;
  return <IconButton key={i} type="button" aria-label={name}><Icon name={name} /></IconButton>;
};

const Tool = ({ name, on }) => (
  <ToolCell type="button" aria-label={name} $on={on}><Icon name={name} /></ToolCell>
);

const MassModel = () => (
  <Scene viewBox="0 133 1067 418" preserveAspectRatio="xMidYMid slice">
    <defs>
      <clipPath id="mass">
        <path d="M309 241Q519.500 320 730 241L599 452H441z" />
      </clipPath>
      <linearGradient id="face" x1="0" y1="0" x2="0" y2="1">
        <stop offset="0" stopColor="#b0b4b5" />
        <stop offset="1" stopColor="#b7b7b7" />
      </linearGradient>
      <filter id="soft" x="-50%" y="-50%" width="200%" height="200%">
        <feGaussianBlur stdDeviation="14" />
      </filter>
    </defs>
    <path d="M0 452.500H441M599 452.500H1067" stroke="#b4b4b4" />
    <path d="M4 452.500H441M604 452.500H1067" stroke="#8d7d93" strokeDasharray="14 6" />
    <g clipPath="url(#mass)">
      <path d="M309 241H730V452H309z" fill="url(#face)" />
      <g filter="url(#soft)">
        <path d="M450 335L560 318 700 290 665 340 600 440 580 480H500L458 400z" fill="#c8c9c9" />
        <path d="M560 360L600 360 585 400 560 475H508L525 400z" fill="#d9d9d9" />
        <path d="M560 276L740 220 735 255 680 280z" fill="#989b9c" />
        <path d="M750 250L615 470H598L706 280z" fill="#a8a8a8" />
      </g>
    </g>
    <path d="M309 241L441 452M730 241L599 452" stroke="#7d6c84" fill="none" />
    <path d="M441 452.500H599" stroke="#8b8b8b" />
    <path d="M309 241Q519.500 320 730 241" stroke="#2e3333" strokeWidth="1.300" fill="none" />
    <g strokeDasharray="10 10" strokeDashoffset="4">
      <path d="M440.500 189V275" stroke="#8f62a3" />
      <path d="M519.500 189V280" stroke="#8f62a3" />
      <path d="M599 189V275" stroke="#a993b8" strokeWidth="1.500" />
      <path d="M440.500 285V450" stroke="#a397a9" strokeDashoffset="0" />
      <path d="M599 285V450" stroke="#b7aebb" strokeWidth="1.500" strokeDashoffset="0" />
    </g>
    <path d="M519.500 281V450" stroke="#c0adc8" />
    <path d="M519.500 281V450" stroke="#8f62a3" strokeDasharray="20 14" />
    <g fill="#762b86">
      <circle cx="309" cy="241" r="3.500" />
      <circle cx="730.500" cy="241" r="3.500" />
      <path d="M516 281a3.500 3.500 0 017 0z" />
      <circle cx="440.500" cy="452" r="3.500" />
      <circle cx="519.500" cy="452" r="3.500" />
      <circle cx="598.500" cy="452" r="3.500" />
    </g>
  </Scene>
);

const PropertyRow = ({ row }) => {
  const id = row.label.replace(/\W+/g, '-').toLowerCase();
  return (
    <tr>
      <LabelCell scope="row" $muted={row.muted}>
        <PropertyLabel htmlFor={id}>{row.label}</PropertyLabel>
      </LabelCell>
      <ValueCell>
        {row.check
          ? <Check id={id} type="checkbox" defaultChecked={row.on} />
          : <ValueInput id={id} type="text" disabled={row.muted} $focus={row.focus} />}
      </ValueCell>
    </tr>
  );
};

const PropertiesPalette = () => (
  <Palette>
    <TypePreview>
      <svg width="47" height="46" viewBox="0 0 47 46" aria-hidden="true">
        <defs>
          <linearGradient id="metal" x1="0" y1="0" x2="1" y2="1">
            <stop offset="0" stopColor="#a5a5a5" />
            <stop offset=".5" stopColor="#808080" />
            <stop offset="1" stopColor="#b4b4b4" />
          </linearGradient>
        </defs>
        <path d="M.5.5h46v45H.5z" fill="#f1f1f1" stroke="#dedede" />
        <path d="M3 27l12-2 13 5 16-5v15H3z" fill="#e4e4e4" />
        <text x="10" y="35" fontFamily="Liberation Sans, sans-serif" fontSize="40" fontWeight="700" fill="url(#metal)">R</text>
      </svg>
      <Caret $color="#888888" />
    </TypePreview>
    <TypeRow>
      <SelectWrap>
        <TypeSelect aria-label="Type"><option>Family: Mass</option></TypeSelect>
        <SelectMark $turn={135} />
      </SelectWrap>
      <EditType type="button" disabled><Icon name="grid" />Edit Type</EditType>
    </TypeRow>
    <PropertyTable>
      <colgroup>
        <col width="94" />
        <col />
      </colgroup>
      {groups.map(group => (
        <tbody key={group.name}>
          <tr>
            <GroupCell colSpan={2}>
              <GroupButton type="button">{group.name}
                <svg width="5" height="9" viewBox="0 0 5 9" aria-hidden="true">
                  <path d="M1 5l1.500-1.500L4 5M1 8l1.500-1.500L4 8" stroke="#222" fill="none" />
                </svg>
              </GroupButton>
            </GroupCell>
          </tr>
          {group.rows.map(row => <PropertyRow key={row.label} row={row} />)}
        </tbody>
      ))}
    </PropertyTable>
    <PaletteFill />
    <PaletteFooter>
      <HelpLink href="#help">Properties help</HelpLink>
      <ApplyButton type="button" disabled>Apply</ApplyButton>
    </PaletteFooter>
    <PaletteTabs>
      <PaletteTab type="button">Project Browser - Family11</PaletteTab>
      <PaletteTab type="button" $active>Properties</PaletteTab>
    </PaletteTabs>
  </Palette>
);

const App = () => (
  <Shell>
    <GlobalStyle />
    <TitleBar>
      <QuickAccess>
        {quickTools.map(renderQuick)}
        <FontMark>A</FontMark>
        <Divider />
        {viewTools.map(renderQuick)}
      </QuickAccess>
      <TitleText>Autodesk Revit 2020.2 - Family11 - 3D View: {'{3D}'}</TitleText>
      <TitleGroup $after={46}>
        <Caret $turn={90} />
        <IconButton type="button" aria-label="Search"><Icon name="binoc" /></IconButton>
        <IconButton type="button" aria-label="Account"><Icon name="user" /></IconButton>
        <span>yifei.wu.office...</span>
        <Caret />
        <IconButton type="button" aria-label="Store"><Icon name="cart" /></IconButton>
        <Divider />
        <IconButton type="button" aria-label="Help"><Icon name="help" /></IconButton>
        <Caret />
      </TitleGroup>
      <TitleGroup $gap={10}>
        <IconButton type="button" aria-label="Minimize"><Icon name="minimize" /></IconButton>
        <IconButton type="button" aria-label="Restore"><Icon name="restore" /></IconButton>
        <IconButton type="button" aria-label="Close"><Icon name="close" /></IconButton>
      </TitleGroup>
    </TitleBar>

    <TabList>
      <RibbonTab type="button" $file>File</RibbonTab>
      {ribbonTabs.map(tab => <RibbonTab key={tab} type="button">{tab}</RibbonTab>)}
      <RibbonTab type="button" $active>Modify</RibbonTab>
      <CollapseButton type="button" aria-label="Collapse ribbon"><Icon name="collapse" /><Caret /></CollapseButton>
    </TabList>

    <Ribbon>
      <Panel title="Select" width={42} pad={6} menu>
        <ModifyButton type="button"><Icon name="cursor" />Modify</ModifyButton>
      </Panel>
      <Panel title="Properties" width={59} pad={1}>
        <ToolGrid $cols={2} $cell={28} $row={25}>
          <Tool name="typeOff" />
          <Tool name="typeFolder" />
          <Tool name="typeProps" on />
          <Tool name="typeGrid" />
        </ToolGrid>
      </Panel>
      <Panel title="Draw" width={181} pad={3}>
        <Column $width={57}>
          <TextTool type="button"><Icon name="model" />Model</TextTool>
          <TextTool type="button"><Icon name="reference" />Reference</TextTool>
          <TextTool type="button"><Icon name="plane" />Plane</TextTool>
        </Column>
        <Gallery>
          <ToolGrid $cols={5} $cell={16} $row={16}>
            {drawTools.map(name => <Tool key={name} name={name} />)}
          </ToolGrid>
          <GalleryScroll>
            <ScrollButton type="button" aria-label="Up"><Caret $turn={180} /></ScrollButton>
            <ScrollButton type="button" aria-label="Down"><Caret /></ScrollButton>
            <ScrollButton type="button" aria-label="More"><Icon name="customize" /></ScrollButton>
          </GalleryScroll>
        </Gallery>
        <ToolGrid $cols={1} $cell={24} $row={25} $left={1}>
          <Tool name="paintFace" />
          <Tool name="paintPlane" />
        </ToolGrid>
      </Panel>
      <Panel title="Work Plane" width={78} pad={2}>
        <BigButton type="button" $width={24}><Icon name="setPlane" />Set</BigButton>
        <Column $width={45} $top={9} $left={4}>
          <TextTool type="button"><Icon name="show" />Show</TextTool>
          <TextTool type="button"><Icon name="viewer" />Viewer</TextTool>
        </Column>
      </Panel>
      <Panel title="Clipboard" width={56} pad={6}>
        <BigButton type="button" disabled $width={26}>
          <Icon name="paste" />
          Paste
          <Caret $color="#888888" />
        </BigButton>
        <ToolGrid $cols={1} $cell={16} $row={17} $left={4}>
          <Tool name="cutClip" />
          <Tool name="copyClip" />
          <Tool name="matchType" />
        </ToolGrid>
      </Panel>
      <Panel title="Geometry" width={77} pad={4}>
        <Column $width={44} $top={9}>
          <TextTool type="button"><Icon name="cutGeo" />Cut <Caret /></TextTool>
          <TextTool type="button"><Icon name="joinGeo" />Join <Caret /></TextTool>
        </Column>
        <Column $width={24} $top={9} $left={2}>
          <TextTool type="button" aria-label="Cope"><Icon name="cope" /></TextTool>
          <TextTool type="button" aria-label="Paint"><Icon name="paintGeo" /><Caret /></TextTool>
        </Column>
      </Panel>
      <Panel title="Modify" width={122} pad={2}>
        <ToolGrid $cols={1} $cell={24} $row={25}>
          <Tool name="align" />
          <Tool name="move" />
        </ToolGrid>
        <ToolGrid $cols={5} $cell={18} $row={17} $left={4}>
          {modifyTools.map(name => <Tool key={name} name={name} />)}
        </ToolGrid>
      </Panel>
      <Panel title="Measure" width={39} pad={2}>
        <ToolGrid $cols={1} $cell={24} $row={25}>
          <Tool name="measureOff" />
          <Tool name="dimOff" />
        </ToolGrid>
        <ToolGrid $cols={1} $cell={12} $row={25}>
          <ToolCell type="button" aria-label="Measure menu"><Caret /></ToolCell>
          <ToolCell type="button" aria-label="Dimension menu"><Caret /></ToolCell>
        </ToolGrid>
      </Panel>
      <Panel title="Family Editor" width={110} pad={0} accent>
        <BigButton type="button" $width={40}><Icon name="load" /><span>Load into<br />Project</span></BigButton>
        <BigButton type="button" $width={68}><Icon name="loadClose" /><span>Load into<br />Project and Close</span></BigButton>
      </Panel>
    </Ribbon>
    <OptionsBar />

    <DocTabs>
      <DocTab type="button"><Icon name="house" />{'{3D}'}</DocTab>
      <DocTab type="button"><Icon name="plan" />Level 1</DocTab>
      <DocTab type="button" $active><Icon name="house" />{'{3D}'}<Spacer /><Icon name="close" /></DocTab>
      <Spacer />
      <IconButton type="button" aria-label="View list"><Icon name="customize" /></IconButton>
    </DocTabs>

    <Workspace>
      <Viewport>
        <MassModel />
        <ViewCube type="button">BACK</ViewCube>
        <CompassRing width="68" height="8" viewBox="0 0 68 8" aria-hidden="true">
          <path d="M0 3h34" stroke="#8fa1a0" strokeWidth="1.500" />
          <path d="M10 5.500h14M35 3l8-1 6 1M42 4l10-2 10 1" stroke="#a3b3b2" strokeDasharray="3 2" fill="none" />
        </CompassRing>
        <NavBar>
          <NavDot />
          <IconButton type="button" aria-label="Steering wheel"><Icon name="wheel" /></IconButton>
          <Caret $color="#84979a" />
          <NavRule />
          <IconButton type="button" aria-label="Zoom"><Icon name="zoomFit" /></IconButton>
          <Caret $color="#84979a" />
          <NavDot />
        </NavBar>
      </Viewport>
      <ScrollTrack $vertical>
        <Chevron $turn={-45} />
        <Space $grow={195} />
        <Thumb />
        <Space $grow={195} />
        <Chevron $turn={135} />
      </ScrollTrack>
    </Workspace>

    <ViewControls>
      <ScaleText>1/16" = 1'-0"</ScaleText>
      <ViewIcons>
        {viewControls.map(renderQuick)}
      </ViewIcons>
      <Chevron $turn={-135} />
      <ScrollTrack>
        <Space $grow={441} />
        <Thumb />
        <Space $grow={440} />
        <Chevron $turn={45} />
        <Space $grow={8} />
        <svg width="6" height="7" viewBox="0 0 6 7" aria-hidden="true">
          <path d="M4 0h1v1H4zM2 3h1v1H2zM4 3h1v1H4zM0 6h1v1H0zM2 6h1v1H2zM4 6h1v1H4z" fill="#a5a5a5" />
        </svg>
      </ScrollTrack>
    </ViewControls>
    <StatusBar>
      <span>Click to select, TAB for alternates, CTRL adds, SHIFT unselects.</span>
      <Spacer />
      <TitleGroup>
        <Icon name="gear" />
        <Icon name="funnel" />
      </TitleGroup>
      <span>:0</span>
    </StatusBar>

    <PropertiesPalette />
    <Watermark>
      <svg width="45" height="41" viewBox="0 0 45 41" aria-hidden="true">
        <g fill="#f7f7f7" stroke="#7a7a7a" strokeWidth=".8">
          <path d="M16 1C7 1 1 7 1 14c0 5 2 8 6 10l-2 6 7-3c2 .5 5 .6 7 .3 9-1 13-7 12-14C30 6 24 1 16 1z" />
          <path d="M31 14c-8 0-14 5-14 12s6 12 14 12c2 0 3-.2 5-.7l6 3-2-5c3-2 5-5 5-9 0-7-6-12.300-14-12.300z" />
        </g>
        <g fill="#707070">
          <circle cx="10.500" cy="10" r="2" />
          <circle cx="21.500" cy="10" r="2" />
          <circle cx="26.500" cy="21.500" r="1.700" />
          <circle cx="35.500" cy="21.500" r="1.700" />
        </g>
      </svg>
      <span>微信号: Atelier_PD</span>
    </Watermark>
  </Shell>
);

export default App;
